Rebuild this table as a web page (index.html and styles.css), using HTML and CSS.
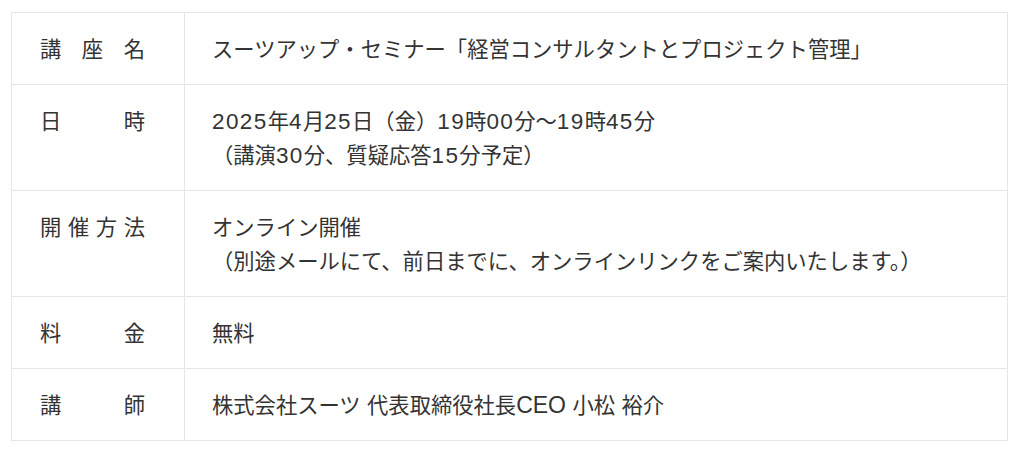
FILE: index.html
```html
<!DOCTYPE html>
<html lang="ja">
<head>
<meta charset="utf-8">
<link rel="stylesheet" href="styles.css">
</head>
<body>
<div class="wrap">
<table class="info">
  <colgroup><col class="c-label"><col></colgroup>
  <tr>
    <th><span class="lbl">講座名</span></th>
    <td>スーツアップ・セミナー「経営コンサルタントとプロジェクト管理」</td>
  </tr>
  <tr>
    <th><span class="lbl">日時</span></th>
    <td><span class="num">2025</span>年<span class="num">4</span>月<span class="num">25</span>日（金）<span class="num">19</span>時<span class="num">00</span>分～<span class="num">19</span>時<span class="num">45</span>分<br>（講演<span class="num">30</span>分、質疑応答<span class="num">15</span>分予定）</td>
  </tr>
  <tr>
    <th><span class="lbl">開催方法</span></th>
    <td>オンライン開催<br>（別途メールにて、前日までに、オンラインリンクをご案内いたします。）</td>
  </tr>
  <tr>
    <th><span class="lbl">料金</span></th>
    <td>無料</td>
  </tr>
  <tr>
    <th><span class="lbl">講師</span></th>
    <td>株式会社スーツ<span class="lat"> </span>代表取締役社長<span class="lat">CEO </span>小松<span class="lat"> </span>裕介</td>
  </tr>
</table>
</div>
</body>
</html>
```
FILE: styles.css
```css
html, body {
  margin: 0;
  padding: 0;
  background: #fff;
}
body {
  font-family: "Noto Sans CJK JP", "Noto Sans", sans-serif;
  color: #333;
}
.wrap {
  padding: 12px 16px 0 11px;
}
.info {
  width: 997px;
  border-collapse: collapse;
  table-layout: fixed;
  font-size: 21.3px;
  line-height: 34px;
}
.c-label {
  width: 173px;
}
.info th,
.info td {
  border: 1px solid #e6e6e6;
  padding: 18px 0 19px;
  text-align: left;
  vertical-align: top;
  font-weight: normal;
}
.info th {
  padding-left: 28px;
}
.info td {
  padding-left: 27px;
}
.lbl {
  display: block;
  width: 105px;
  text-align: justify;
  text-align-last: justify;
}
.num {
  font-family: "Liberation Sans", Arial, sans-serif;
  font-size: 22.5px;
  letter-spacing: 1.4px;
  line-height: 1;
}
.lat {
  font-family: "Liberation Sans", Arial, sans-serif;
  font-size: 23px;
  line-height: 1;
}
```
